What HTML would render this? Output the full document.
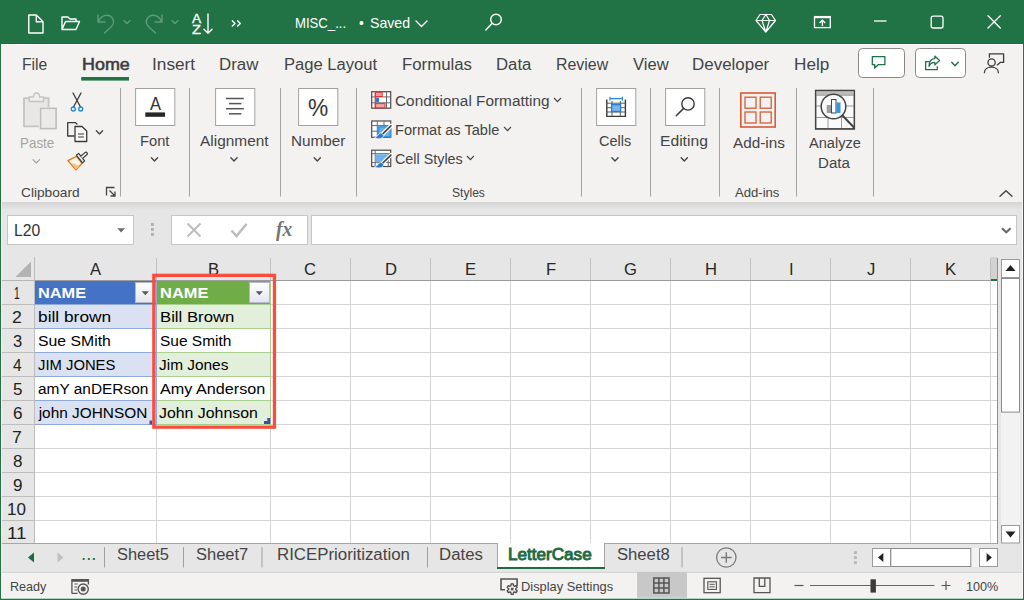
<!DOCTYPE html>
<html lang="en"><head><meta charset="utf-8"><title>MISC - Excel</title>
<style>
html,body{margin:0;padding:0;background:#fff;}
body{width:1024px;height:600px;overflow:hidden;position:relative;font-family:"Liberation Sans",sans-serif;}
#app{position:absolute;left:0;top:0;width:1024px;height:600px;overflow:hidden;background:#f3f2f1;}
.layer{position:absolute;left:0;top:0;width:1024px;height:600px;display:block}
.t{position:absolute;white-space:pre;line-height:1;transform-origin:0 0;font-family:"Liberation Sans",sans-serif;}
</style></head><body>
<div id="app">
<svg class="layer" width="1024" height="600" viewBox="0 0 1024 600">
<defs><linearGradient id="shadow" x1="0" y1="0" x2="0" y2="1"><stop offset="0" stop-color="#d4d4d4"/><stop offset="1" stop-color="#e6e6e6"/></linearGradient><linearGradient id="fbtn" x1="0" y1="0" x2="0" y2="1"><stop offset="0" stop-color="#ffffff"/><stop offset="1" stop-color="#e4e6ee"/></linearGradient></defs>
<rect x="0" y="0" width="1024" height="44" fill="#217346" />
<rect x="0" y="44" width="1024" height="158" fill="#f3f2f1" />
<rect x="0" y="202" width="1024" height="56" fill="#e6e6e6" />
<rect x="0" y="202" width="1024" height="8" fill="url(#shadow)" />
<rect x="0" y="258" width="1024" height="23" fill="#e6e6e6" />
<rect x="0" y="281" width="35" height="263" fill="#e6e6e6" />
<rect x="35" y="281" width="962" height="262" fill="#fff" />
<rect x="997" y="258" width="27" height="286" fill="#e6e6e6" />
<rect x="0" y="544" width="1024" height="28.5" fill="#e6e6e6" />
<rect x="0" y="572.5" width="1024" height="28" fill="#f3f2f1" />
<line x1="0" y1="572.3" x2="1024" y2="572.3" stroke="#cfcfcf" stroke-width="1" />
<path d="M28.8 15 H36.3 L43 21.7 V33 H28.8 Z M36.3 15 V21.7 H43" stroke="#fff" stroke-width="1.4" fill="none" stroke-linejoin="round" stroke-linecap="round"/>
<path d="M62 29.5 V17 H68 L70 19 H76 V21.5 M62 29.5 L65.5 21.5 H79.5 L76 29.5 Z" stroke="#fff" stroke-width="1.4" fill="none" stroke-linejoin="round" stroke-linecap="round"/>
<path d="M98 15 V22 H105 M98.5 21.5 C101 15 108 13.5 112 17.5 C115 21 113.5 25 110 28 L104.5 33" stroke="#5f9c7b" stroke-width="1.4" fill="none" stroke-linejoin="round" stroke-linecap="round"/>
<path d="M124 20.5 L127 23.5 L130 20.5" stroke="#5f9c7b" stroke-width="1.4" fill="none" stroke-linejoin="round" stroke-linecap="round"/>
<path d="M162 15 V22 H155 M161.5 21.5 C159 15 152 13.5 148 17.5 C145 21 146.5 25 150 28 L155.5 33" stroke="#5f9c7b" stroke-width="1.4" fill="none" stroke-linejoin="round" stroke-linecap="round"/>
<path d="M172 20.5 L175 23.5 L178 20.5" stroke="#5f9c7b" stroke-width="1.4" fill="none" stroke-linejoin="round" stroke-linecap="round"/>
<path d="M208 14 V33.3 M204 29.3 L208 33.3 L212 29.3" stroke="#fff" stroke-width="1.4" fill="none" stroke-linejoin="round" stroke-linecap="round"/>
<path d="M232.3 20.8 L235 23.4 L232.3 26 M237.6 20.8 L240.3 23.4 L237.6 26" stroke="#fff" stroke-width="1.4" fill="none" stroke-linejoin="round" stroke-linecap="round"/>
<path d="M416 21 L421.5 26.5 L427 21" stroke="#fff" stroke-width="1.4" fill="none" stroke-linejoin="round" stroke-linecap="round"/>
<circle cx="496" cy="19.5" r="5.3" stroke="#fff" stroke-width="1.4" fill="none" stroke-linejoin="round" stroke-linecap="round"/><path d="M492 23.5 L485.8 30" stroke="#fff" stroke-width="1.4" fill="none" stroke-linejoin="round" stroke-linecap="round"/>
<path d="M760 14.5 H771.5 L775.5 20.5 L765.8 32 L756 20.5 Z M756 20.5 H775.5 M762 20.5 L765.8 14.5 L769.5 20.5 L765.8 32 Z" stroke="#fff" stroke-width="1.2" fill="none" stroke-linejoin="round"/>
<rect x="814.5" y="16.6" width="15.8" height="11" stroke="#fff" stroke-width="1.3" fill="none"/><path d="M814 17.2 H831" stroke="#fff" stroke-width="2"/><path d="M822.4 26 V20.3 M819.6 23 L822.4 20.2 L825.2 23" stroke="#fff" stroke-width="1.3" fill="none"/>
<path d="M874 21 H886.5" stroke="#fff" stroke-width="1.3"/>
<rect x="931.2" y="16.2" width="11.8" height="11.8" rx="2" stroke="#fff" stroke-width="1.3" fill="none"/>
<path d="M988 15.7 L1000.3 28 M1000.3 15.7 L988 28" stroke="#fff" stroke-width="1.3" stroke-linecap="round"/>
<rect x="81.2" y="77" width="47.8" height="3.6" fill="#217346" />
<rect x="858.5" y="48.5" width="46" height="29" rx="4" fill="#fff" stroke="#8a8886" stroke-width="1"/>
<rect x="915.5" y="48.5" width="50" height="29" rx="4" fill="#fff" stroke="#8a8886" stroke-width="1"/>
<path d="M872.3 56.7 H884.9 V64.7 H878.2 L874.7 68 V64.7 H872.3 Z" stroke="#1e7145" stroke-width="1.3" fill="none" stroke-linejoin="round" stroke-linecap="round"/>
<path d="M929.6 61.7 H925.6 V69.6 H937.3 V66.2" stroke="#1e7145" stroke-width="1.3" fill="none" stroke-linejoin="round"/><path d="M934.8 56 L939.5 60.5 L934.8 65 V62.4 C932 62.4 930.2 63.6 929 66.4 C929 61.6 931.4 58.8 934.8 58.6 Z" stroke="#1e7145" stroke-width="1.15" fill="none" stroke-linejoin="round"/>
<path d="M951.75 62.3 L955 65.7 L958.25 62.3" stroke="#1e7145" stroke-width="1.4" fill="none" stroke-linecap="round" stroke-linejoin="round"/>
<circle cx="991.6" cy="62.4" r="3.6" stroke="#3b3a39" stroke-width="1.3" fill="none" stroke-linejoin="round" stroke-linecap="round"/><path d="M984.4 72.7 C984.4 65.2 998.4 65.2 998.4 72.7 M989.4 57.2 V53.9 H1003.6 V62.4 H1000.2 L997.3 64.9" stroke="#3b3a39" stroke-width="1.3" fill="none" stroke-linejoin="round" stroke-linecap="round"/>
<line x1="120.5" y1="88" x2="120.5" y2="196.5" stroke="#a6a4a2" stroke-width="1" />
<line x1="189.5" y1="88" x2="189.5" y2="196.5" stroke="#a6a4a2" stroke-width="1" />
<line x1="280.5" y1="88" x2="280.5" y2="196.5" stroke="#a6a4a2" stroke-width="1" />
<line x1="356.5" y1="88" x2="356.5" y2="196.5" stroke="#a6a4a2" stroke-width="1" />
<line x1="581.5" y1="88" x2="581.5" y2="196.5" stroke="#a6a4a2" stroke-width="1" />
<line x1="650.5" y1="88" x2="650.5" y2="196.5" stroke="#a6a4a2" stroke-width="1" />
<line x1="719.5" y1="88" x2="719.5" y2="196.5" stroke="#a6a4a2" stroke-width="1" />
<line x1="796.5" y1="88" x2="796.5" y2="196.5" stroke="#a6a4a2" stroke-width="1" />
<line x1="873.5" y1="88" x2="873.5" y2="196.5" stroke="#a6a4a2" stroke-width="1" />
<rect x="135.6" y="88.5" width="39.2" height="37" fill="#fff" stroke="#a3a19f" stroke-width="1"/>
<rect x="215.6" y="88.5" width="39.2" height="37" fill="#fff" stroke="#a3a19f" stroke-width="1"/>
<rect x="298.6" y="88.5" width="39.2" height="37" fill="#fff" stroke="#a3a19f" stroke-width="1"/>
<rect x="596.6" y="88.5" width="39.2" height="37" fill="#fff" stroke="#a3a19f" stroke-width="1"/>
<rect x="665.6" y="88.5" width="39.2" height="37" fill="#fff" stroke="#a3a19f" stroke-width="1"/>
<rect x="145.3" y="112.4" width="19.7" height="4.4" fill="#262626" />
<line x1="226" y1="98.5" x2="243.8" y2="98.5" stroke="#555" stroke-width="1.5" />
<line x1="229" y1="103.6" x2="241.4" y2="103.6" stroke="#555" stroke-width="1.5" />
<line x1="226" y1="108.7" x2="243.8" y2="108.7" stroke="#555" stroke-width="1.5" />
<line x1="229" y1="113.8" x2="241.4" y2="113.8" stroke="#555" stroke-width="1.5" />
<path d="M151.4 157.75 L154.5 161.05 L157.6 157.75" stroke="#444" stroke-width="1.35" fill="none" stroke-linecap="round" stroke-linejoin="round"/>
<path d="M230.9 157.75 L234 161.05 L237.1 157.75" stroke="#444" stroke-width="1.35" fill="none" stroke-linecap="round" stroke-linejoin="round"/>
<path d="M314.2 157.75 L317.3 161.05 L320.40000000000003 157.75" stroke="#444" stroke-width="1.35" fill="none" stroke-linecap="round" stroke-linejoin="round"/>
<path d="M611.9 157.75 L615 161.05 L618.1 157.75" stroke="#444" stroke-width="1.35" fill="none" stroke-linecap="round" stroke-linejoin="round"/>
<path d="M681.1999999999999 157.75 L684.3 161.05 L687.4 157.75" stroke="#444" stroke-width="1.35" fill="none" stroke-linecap="round" stroke-linejoin="round"/>
<path d="M33.0 159.60000000000002 L36.3 163.0 L39.599999999999994 159.60000000000002" stroke="#a6a4a2" stroke-width="1.3" fill="none" stroke-linecap="round" stroke-linejoin="round"/>
<path d="M96.4 130.75 L99.5 134.05 L102.6 130.75" stroke="#444" stroke-width="1.35" fill="none" stroke-linecap="round" stroke-linejoin="round"/>
<path d="M554.4 98.35 L557.5 101.65 L560.6 98.35" stroke="#444" stroke-width="1.35" fill="none" stroke-linecap="round" stroke-linejoin="round"/>
<path d="M504.4 127.35 L507.5 130.65 L510.6 127.35" stroke="#444" stroke-width="1.35" fill="none" stroke-linecap="round" stroke-linejoin="round"/>
<path d="M467.29999999999995 156.35 L470.4 159.65 L473.5 156.35" stroke="#444" stroke-width="1.35" fill="none" stroke-linecap="round" stroke-linejoin="round"/>
<path d="M1000 196.3 L1006 190.8 L1012 196.3" stroke="#444" stroke-width="1.4" fill="none" stroke-linecap="round" stroke-linejoin="round"/>
<path d="M24 98.2 H48.6 V126.4 H24 Z" fill="#e9e7e6" stroke="#c6c4c2" stroke-width="1.8" stroke-linejoin="round"/>
<path d="M29.3 101.4 V97 H33.4 C33.4 91.6 39.6 91.6 39.6 97 H43.6 V101.4 Z" fill="#f0efee" stroke="#c6c4c2" stroke-width="1.5" stroke-linejoin="round"/>
<rect x="39" y="106.8" width="19" height="23.6" fill="#f3f2f1"/>
<rect x="40.5" y="108.3" width="15.6" height="20.3" fill="#eceae9" stroke="#bfbdbb" stroke-width="1.6"/>
<path d="M73 93 L80.5 107 M81 93 L73.5 107" stroke="#3b3a39" stroke-width="1.3" fill="none" stroke-linecap="round"/><circle cx="73.3" cy="109" r="2" stroke="#1e8ad6" stroke-width="1.3" fill="none"/><circle cx="80.7" cy="109" r="2" stroke="#1e8ad6" stroke-width="1.3" fill="none"/>
<path d="M74 136 H67.7 V122.7 H75.5 L77 124" stroke="#3b3a39" stroke-width="1.3" fill="none" stroke-linejoin="round" stroke-linecap="round"/><path d="M75 126.5 H82 L86.7 131 V141.5 H75 Z" stroke="#3b3a39" stroke-width="1.3" fill="#f8f8f8" stroke-linejoin="round"/><path d="M78 134 H84 M78 137 H84" stroke="#3b3a39" stroke-width="1.1"/>
<path d="M67.9 160.6 L76.6 156.4 L82 163.3 L76 169.9 Z" stroke="#e07a12" stroke-width="1.4" fill="#fdf3e6" stroke-linejoin="round"/>
<path d="M71.6 162.8 L79.4 166 L76 169.4 Z" fill="#f7c27f"/>
<path d="M76.3 155.2 L78.6 153.4 L84.6 160.8 L82.6 162.9 Z" stroke="#3b3a39" stroke-width="1.2" fill="#f3f2f1" stroke-linejoin="round"/>
<path d="M80.6 156.2 L85 152.6 C86.6 151.4 88.3 153.6 86.8 154.8 L82.6 158.4" stroke="#3b3a39" stroke-width="1.2" fill="#f3f2f1" stroke-linejoin="round"/>
<path d="M106.5 195.5 V187.5 H114.5 M109.5 190.5 L115 196 M115 191.5 V196 H110.5" stroke="#444" stroke-width="1.3" fill="none"/>
<rect x="371.7" y="91.7" width="19" height="16.5" fill="#fff" stroke="#4a4a4a" stroke-width="1.2"/>
<path d="M386.5 91.7 V108.2 M371.7 96.9 H390.7 M371.7 102.8 H390.7" stroke="#6a6a6a" stroke-width="1" fill="none"/>
<rect x="375.6" y="92.3" width="6.6" height="4.2" fill="#f7a1a5" stroke="#e5332f" stroke-width="1"/>
<rect x="375.6" y="103.6" width="9.4" height="4.2" fill="#f7a1a5" stroke="#e5332f" stroke-width="1"/>
<rect x="375.4" y="97.7" width="3.6" height="4.6" fill="#2b7cd3"/>
<path d="M375.2 91.7 V108.2" stroke="#e5332f" stroke-width="1.2"/>
<rect x="371.7" y="121" width="19" height="16.3" fill="#fff" stroke="#4a4a4a" stroke-width="1.2"/>
<path d="M377.3 121 V137.3 M384 121 V126 M371.7 125.6 H390.7 M371.7 131.2 H378" stroke="#6a6a6a" stroke-width="1" fill="none"/>
<rect x="377.8" y="126.1" width="13.4" height="11.4" fill="#3a96dd"/>
<rect x="379.3" y="127.6" width="10.4" height="8.4" fill="#69b1ea"/>
<path d="M391.1 125.7 L381.9 134.7" stroke="#fff" stroke-width="4" stroke-linecap="round"/><path d="M390.9 125.9 L382.3 134.3" stroke="#444" stroke-width="1.7" stroke-linecap="round"/><path d="M381.1 132.7 C378.3 133.3 378.1 136.7 374.5 137.7 C379.0 139.9 383.5 138.5 383.7 135.3 Z" fill="#2b7cd3" stroke="#f3f2f1" stroke-width="0.8"/>
<rect x="371.7" y="150.2" width="19" height="16.3" fill="#fff" stroke="#4a4a4a" stroke-width="1.2"/>
<path d="M375.2 150.2 V166.5 M371.7 153.7 H390.7 M371.7 162.6 H390.7 M388.2 153.7 V166.5" stroke="#6a6a6a" stroke-width="1" fill="none"/>
<rect x="375.7" y="154.2" width="12" height="8" fill="#6fb3ee"/>
<path d="M391.1 154.89999999999998 L381.9 163.89999999999998" stroke="#fff" stroke-width="4" stroke-linecap="round"/><path d="M390.9 155.1 L382.3 163.5" stroke="#444" stroke-width="1.7" stroke-linecap="round"/><path d="M381.1 161.89999999999998 C378.3 162.5 378.1 165.89999999999998 374.5 166.89999999999998 C379.0 169.1 383.5 167.7 383.7 164.5 Z" fill="#2b7cd3" stroke="#f3f2f1" stroke-width="0.8"/>
<path d="M606.8 99.6 V116.4 H625.4 V99.6" stroke="#3b3a39" stroke-width="1.4" fill="#fff"/>
<path d="M606.8 103.2 H625.4 M606.8 107.7 H625.4 M606.8 112 H625.4 M612 101 V116.4 M620.3 101 V116.4" stroke="#5a5a5a" stroke-width="1" fill="none"/>
<rect x="611.6" y="104.7" width="9" height="6.8" fill="#7db5ea" stroke="#1e7fd6" stroke-width="1.3"/>
<path d="M610 96.8 V100.5 M622.4 96.8 V100.5 M610 98.6 H622.4" stroke="#2b88d8" stroke-width="1.2" fill="none"/>
<circle cx="688" cy="103.9" r="6.2" stroke="#3b3a39" stroke-width="1.4" fill="#fafafa"/><path d="M683.4 108.6 L676.2 115.8" stroke="#3b3a39" stroke-width="1.5" stroke-linecap="round"/>
<rect x="740.8" y="93" width="34.4" height="34" fill="none" stroke="#d85b35" stroke-width="1.6"/>
<rect x="745" y="97.2" width="11" height="11" fill="none" stroke="#d85b35" stroke-width="1.3"/>
<rect x="760.2" y="97.2" width="11" height="11" fill="none" stroke="#d85b35" stroke-width="1.3"/>
<rect x="745" y="112" width="11" height="11" fill="none" stroke="#d85b35" stroke-width="1.3"/>
<rect x="760.2" y="112" width="11" height="11" fill="none" stroke="#d85b35" stroke-width="1.3"/>
<rect x="815.6" y="90.5" width="38.8" height="38.4" fill="#fafafa" stroke="#444" stroke-width="1.3"/>
<rect x="815.6" y="90.5" width="38.8" height="4.6" fill="#bdbdbd" />
<path d="M815.6 95.2 H854.4 M815.6 106 H854.4 M815.6 117.5 H854.4 M828 95.2 V129 M841.5 95.2 V129" stroke="#9a9a9a" stroke-width="1"/>
<rect x="815.6" y="90.5" width="38.8" height="38.4" fill="none" stroke="#444" stroke-width="1.3"/>
<circle cx="833.5" cy="106.5" r="12.3" fill="#fafafa" stroke="#444" stroke-width="1.5"/>
<rect x="826.7" y="105" width="4.5" height="8" fill="#9e9e9e" />
<rect x="831.5" y="99.5" width="4.5" height="13.5" fill="#fff" stroke="#444" stroke-width="1"/>
<rect x="836.3" y="102.5" width="4.2" height="10.5" fill="#3a96dd" />
<path d="M842.5 115.5 L854 127.5" stroke="#444" stroke-width="2" stroke-linecap="round"/>
<rect x="7.5" y="215.5" width="126" height="29" fill="#fff" stroke="#c6c6c6" stroke-width="1"/>
<rect x="171.5" y="215.5" width="136" height="29" fill="#fff" stroke="#c6c6c6" stroke-width="1"/>
<rect x="311.5" y="215.5" width="705" height="29" fill="#fff" stroke="#c6c6c6" stroke-width="1"/>
<path d="M117.3 228.2 H125 L121.15 232.4 Z" stroke="none" stroke-width="1" fill="#6a6a6a" />
<rect x="151" y="223" width="2.8" height="2.8" fill="#adadad" />
<rect x="151" y="228" width="2.8" height="2.8" fill="#adadad" />
<rect x="151" y="233" width="2.8" height="2.8" fill="#adadad" />
<path d="M187.5 223.5 L200.5 236.5 M200.5 223.5 L187.5 236.5" stroke="#bdbdbd" stroke-width="2" fill="none"/>
<path d="M231.5 230.5 L236.5 236 L246.5 224" stroke="#bdbdbd" stroke-width="2.6" fill="none"/>
<path d="M1002 228.3 L1006.3 232.3 L1010.6 228.3" stroke="#6a6a6a" stroke-width="2.2" fill="none" />
<line x1="35" y1="280.5" x2="997" y2="280.5" stroke="#9d9d9d" stroke-width="1" />
<line x1="1" y1="280.5" x2="35" y2="280.5" stroke="#b5b5b5" stroke-width="1" />
<line x1="34.5" y1="257" x2="34.5" y2="543" stroke="#bcbcbc" stroke-width="1" />
<line x1="156.5" y1="258" x2="156.5" y2="280" stroke="#c0c0c0" stroke-width="1" />
<line x1="270.5" y1="258" x2="270.5" y2="280" stroke="#c0c0c0" stroke-width="1" />
<line x1="350.5" y1="258" x2="350.5" y2="280" stroke="#c0c0c0" stroke-width="1" />
<line x1="430.5" y1="258" x2="430.5" y2="280" stroke="#c0c0c0" stroke-width="1" />
<line x1="510.5" y1="258" x2="510.5" y2="280" stroke="#c0c0c0" stroke-width="1" />
<line x1="590.5" y1="258" x2="590.5" y2="280" stroke="#c0c0c0" stroke-width="1" />
<line x1="670.5" y1="258" x2="670.5" y2="280" stroke="#c0c0c0" stroke-width="1" />
<line x1="750.5" y1="258" x2="750.5" y2="280" stroke="#c0c0c0" stroke-width="1" />
<line x1="830.5" y1="258" x2="830.5" y2="280" stroke="#c0c0c0" stroke-width="1" />
<line x1="910.5" y1="258" x2="910.5" y2="280" stroke="#c0c0c0" stroke-width="1" />
<line x1="990.5" y1="258" x2="990.5" y2="280" stroke="#c0c0c0" stroke-width="1" />
<path d="M31 261.5 V277 H15.5 Z" stroke="none" stroke-width="1" fill="#b3b3b3" />
<rect x="991" y="257" width="6" height="23" fill="#d2d2d2" />
<rect x="991" y="279" width="6" height="2" fill="#217346" />
<line x1="1" y1="304.5" x2="34" y2="304.5" stroke="#bdbdbd" stroke-width="1" />
<line x1="1" y1="328.5" x2="34" y2="328.5" stroke="#bdbdbd" stroke-width="1" />
<line x1="1" y1="352.5" x2="34" y2="352.5" stroke="#bdbdbd" stroke-width="1" />
<line x1="1" y1="376.5" x2="34" y2="376.5" stroke="#bdbdbd" stroke-width="1" />
<line x1="1" y1="400.5" x2="34" y2="400.5" stroke="#bdbdbd" stroke-width="1" />
<line x1="1" y1="424.5" x2="34" y2="424.5" stroke="#bdbdbd" stroke-width="1" />
<line x1="1" y1="448.5" x2="34" y2="448.5" stroke="#bdbdbd" stroke-width="1" />
<line x1="1" y1="472.5" x2="34" y2="472.5" stroke="#bdbdbd" stroke-width="1" />
<line x1="1" y1="496.5" x2="34" y2="496.5" stroke="#bdbdbd" stroke-width="1" />
<line x1="1" y1="520.5" x2="34" y2="520.5" stroke="#bdbdbd" stroke-width="1" />
<line x1="35" y1="304.5" x2="997" y2="304.5" stroke="#d4d4d4" stroke-width="1" />
<line x1="35" y1="328.5" x2="997" y2="328.5" stroke="#d4d4d4" stroke-width="1" />
<line x1="35" y1="352.5" x2="997" y2="352.5" stroke="#d4d4d4" stroke-width="1" />
<line x1="35" y1="376.5" x2="997" y2="376.5" stroke="#d4d4d4" stroke-width="1" />
<line x1="35" y1="400.5" x2="997" y2="400.5" stroke="#d4d4d4" stroke-width="1" />
<line x1="35" y1="424.5" x2="997" y2="424.5" stroke="#d4d4d4" stroke-width="1" />
<line x1="35" y1="448.5" x2="997" y2="448.5" stroke="#d4d4d4" stroke-width="1" />
<line x1="35" y1="472.5" x2="997" y2="472.5" stroke="#d4d4d4" stroke-width="1" />
<line x1="35" y1="496.5" x2="997" y2="496.5" stroke="#d4d4d4" stroke-width="1" />
<line x1="35" y1="520.5" x2="997" y2="520.5" stroke="#d4d4d4" stroke-width="1" />
<line x1="156.5" y1="281" x2="156.5" y2="543" stroke="#d4d4d4" stroke-width="1" />
<line x1="270.5" y1="281" x2="270.5" y2="543" stroke="#d4d4d4" stroke-width="1" />
<line x1="350.5" y1="281" x2="350.5" y2="543" stroke="#d4d4d4" stroke-width="1" />
<line x1="430.5" y1="281" x2="430.5" y2="543" stroke="#d4d4d4" stroke-width="1" />
<line x1="510.5" y1="281" x2="510.5" y2="543" stroke="#d4d4d4" stroke-width="1" />
<line x1="590.5" y1="281" x2="590.5" y2="543" stroke="#d4d4d4" stroke-width="1" />
<line x1="670.5" y1="281" x2="670.5" y2="543" stroke="#d4d4d4" stroke-width="1" />
<line x1="750.5" y1="281" x2="750.5" y2="543" stroke="#d4d4d4" stroke-width="1" />
<line x1="830.5" y1="281" x2="830.5" y2="543" stroke="#d4d4d4" stroke-width="1" />
<line x1="910.5" y1="281" x2="910.5" y2="543" stroke="#d4d4d4" stroke-width="1" />
<line x1="990.5" y1="281" x2="990.5" y2="543" stroke="#d4d4d4" stroke-width="1" />
<rect x="35" y="281" width="121" height="24" fill="#4472c4" />
<rect x="35" y="305" width="121" height="24" fill="#d9e1f2" />
<rect x="35" y="353" width="121" height="24" fill="#d9e1f2" />
<rect x="35" y="401" width="121" height="24" fill="#d9e1f2" />
<rect x="35" y="329" width="121" height="24" fill="#fff" />
<rect x="35" y="377" width="121" height="24" fill="#fff" />
<line x1="35" y1="304.5" x2="156" y2="304.5" stroke="#8ea9db" stroke-width="1" />
<line x1="35" y1="328.5" x2="156" y2="328.5" stroke="#8ea9db" stroke-width="1" />
<line x1="35" y1="352.5" x2="156" y2="352.5" stroke="#8ea9db" stroke-width="1" />
<line x1="35" y1="376.5" x2="156" y2="376.5" stroke="#8ea9db" stroke-width="1" />
<line x1="35" y1="400.5" x2="156" y2="400.5" stroke="#8ea9db" stroke-width="1" />
<line x1="35" y1="424.5" x2="156" y2="424.5" stroke="#8ea9db" stroke-width="1" />
<rect x="157" y="281" width="114" height="24" fill="#70ad47" />
<rect x="157" y="305" width="114" height="24" fill="#e2efda" />
<rect x="157" y="353" width="114" height="24" fill="#e2efda" />
<rect x="157" y="401" width="114" height="24" fill="#e2efda" />
<rect x="157" y="329" width="114" height="24" fill="#fff" />
<rect x="157" y="377" width="114" height="24" fill="#fff" />
<line x1="157" y1="304.5" x2="271" y2="304.5" stroke="#a9d08e" stroke-width="1" />
<line x1="157" y1="328.5" x2="271" y2="328.5" stroke="#a9d08e" stroke-width="1" />
<line x1="157" y1="352.5" x2="271" y2="352.5" stroke="#a9d08e" stroke-width="1" />
<line x1="157" y1="376.5" x2="271" y2="376.5" stroke="#a9d08e" stroke-width="1" />
<line x1="157" y1="400.5" x2="271" y2="400.5" stroke="#a9d08e" stroke-width="1" />
<line x1="157" y1="424.5" x2="271" y2="424.5" stroke="#a9d08e" stroke-width="1" />
<line x1="270.5" y1="281" x2="270.5" y2="425" stroke="#a9d08e" stroke-width="1" />
<line x1="156.5" y1="281" x2="156.5" y2="425" stroke="#8ea9db" stroke-width="1" />
<rect x="135.5" y="282.5" width="20" height="20" fill="url(#fbtn)" stroke="#b4b8cc" stroke-width="1"/>
<path d="M141.7 291.3 H148.9 L145.3 295.2 Z" stroke="none" stroke-width="1" fill="#595959" />
<rect x="249.5" y="282.5" width="20" height="20" fill="url(#fbtn)" stroke="#b4b8cc" stroke-width="1"/>
<path d="M255.7 291.3 H262.9 L259.3 295.2 Z" stroke="none" stroke-width="1" fill="#595959" />
<path d="M149.5 424.5 V420.5 H152 V424.5 Z" stroke="none" stroke-width="1" fill="#3b4fa3" />
<path d="M264 424 H270.3 V418 H267.3 V421 H264 Z" stroke="none" stroke-width="1" fill="#3b4fa3" />
<line x1="997.5" y1="258" x2="997.5" y2="544" stroke="#8f8f8f" stroke-width="1" />
<rect x="1001" y="278" width="19.4" height="248" fill="#f2f2f2" />
<rect x="1001.5" y="259.5" width="18" height="18" fill="#fff" stroke="#9a9a9a"/>
<path d="M1005.5 271 L1010.5 265 L1015.5 271 Z" stroke="none" stroke-width="1" fill="#222" />
<rect x="1001.5" y="278.5" width="18" height="133.6" fill="#fff" stroke="#8a8a8a"/>
<rect x="1001.5" y="525.5" width="18" height="17.5" fill="#fff" stroke="#9a9a9a"/>
<path d="M1005.5 531.5 L1010.5 537.5 L1015.5 531.5 Z" stroke="none" stroke-width="1" fill="#222" />
<line x1="1" y1="543.5" x2="997" y2="543.5" stroke="#a6a6a6" stroke-width="1" />
<path d="M28 557.5 L34 552.5 V562.5 Z" stroke="none" stroke-width="1" fill="#1e6b41" />
<path d="M63.5 557.5 L57.5 552.5 V562.5 Z" stroke="none" stroke-width="1" fill="#c0c0c0" />
<line x1="104.5" y1="547" x2="104.5" y2="567.5" stroke="#a0a0a0" stroke-width="1" />
<line x1="183.5" y1="547" x2="183.5" y2="567.5" stroke="#a0a0a0" stroke-width="1" />
<line x1="262" y1="547" x2="262" y2="567.5" stroke="#a0a0a0" stroke-width="1" />
<line x1="427.5" y1="547" x2="427.5" y2="567.5" stroke="#a0a0a0" stroke-width="1" />
<line x1="682" y1="547" x2="682" y2="567.5" stroke="#a0a0a0" stroke-width="1" />
<rect x="497" y="543" width="108" height="25" fill="#fff" />
<line x1="497.5" y1="543" x2="497.5" y2="567" stroke="#a6a6a6" stroke-width="1" />
<line x1="604.5" y1="543" x2="604.5" y2="567" stroke="#a6a6a6" stroke-width="1" />
<rect x="497" y="567" width="108" height="2" fill="#1e6b41" />
<circle cx="726.3" cy="557.5" r="9.7" fill="none" stroke="#7a7a7a" stroke-width="1.3"/><path d="M721 557.5 H731.6 M726.3 552.2 V562.8" stroke="#7a7a7a" stroke-width="1.4"/>
<rect x="853.9" y="551.2" width="3" height="2.8" fill="#b6b6b6" />
<rect x="853.9" y="556.2" width="3" height="2.8" fill="#b6b6b6" />
<rect x="853.9" y="561.2" width="3" height="2.8" fill="#b6b6b6" />
<rect x="872" y="548" width="126" height="19" fill="#f2f2f2" />
<rect x="872.5" y="548.5" width="18" height="18" fill="#fff" stroke="#9a9a9a"/>
<path d="M883.3 553 L878 557.5 L883.3 562 Z" stroke="none" stroke-width="1" fill="#222" />
<rect x="890.8" y="548.5" width="80" height="18" fill="#fff" stroke="#8a8a8a"/>
<rect x="979.5" y="548.5" width="18" height="18" fill="#fff" stroke="#9a9a9a"/>
<path d="M986.6 553 L991.9 557.5 L986.6 562 Z" stroke="none" stroke-width="1" fill="#222" />
<path d="M71.9 593.4 V579.6 H88.4 V584.5 M71.9 593.4 H77.5" stroke="#555" stroke-width="1.3" fill="none"/><path d="M71.9 580.6 H88.4" stroke="#555" stroke-width="2.4"/><path d="M74.5 584 H77.6 M74.5 587 H77 M74.5 590 H77" stroke="#555" stroke-width="1.2"/><circle cx="83.2" cy="589.1" r="5.1" stroke="#555" stroke-width="1.4" fill="#f3f2f1"/><circle cx="83.2" cy="589.1" r="2.5" fill="#555"/>
<path d="M505 589.7 H501 V579 H517.1 V586" stroke="#555" stroke-width="1.6" fill="none"/>
<path d="M511.10 583.92 L513.30 583.92 L513.51 585.85 L514.35 586.34 L516.14 585.55 L517.24 587.46 L515.67 588.61 L515.67 589.59 L517.24 590.74 L516.14 592.65 L514.35 591.86 L513.51 592.35 L513.30 594.28 L511.10 594.28 L510.89 592.35 L510.05 591.86 L508.26 592.65 L507.16 590.74 L508.73 589.59 L508.73 588.61 L507.16 587.46 L508.26 585.55 L510.05 586.34 L510.89 585.85 Z" stroke="#444" stroke-width="1.2" fill="#f3f2f1" stroke-linejoin="round"/><circle cx="512.2" cy="589.1" r="1.5" fill="#555"/>
<rect x="637" y="572" width="50" height="26.5" fill="#c8c8c8" />
<path d="M653.8 578 H669 V593 H653.8 Z M658.9 578 V593 M663.9 578 V593 M653.8 583 H669 M653.8 588 H669" stroke="#555" stroke-width="1.5" fill="none"/>
<rect x="704" y="578.3" width="16.2" height="14.4" stroke="#555" stroke-width="1.3" fill="none"/><rect x="707.8" y="581.8" width="8.6" height="7.6" stroke="#555" stroke-width="1.1" fill="none"/><path d="M709.5 584.3 H714.7 M709.5 586.8 H714.7" stroke="#555" stroke-width="1"/>
<path d="M754 578 H770 V592.7 H754 Z M759.3 578 V586.3 H764.8 V578" stroke="#555" stroke-width="1.3" fill="none"/>
<line x1="794.5" y1="585.5" x2="803.5" y2="585.5" stroke="#555" stroke-width="1.2" />
<line x1="810" y1="585.5" x2="934.5" y2="585.5" stroke="#666" stroke-width="1" />
<rect x="870.5" y="579.3" width="5.4" height="13.3" fill="#3b3b3b" />
<path d="M941.5 585.5 H950.5 M946 581 V590" stroke="#555" stroke-width="1.2"/>
<rect x="1" y="44" width="1022" height="1" fill="#fbfbfa" />
<rect x="1" y="44" width="1" height="555" fill="#f9f9f8" />
<rect x="1022" y="44" width="1" height="555" fill="#fbfbfa" />
<rect x="1" y="597.8" width="1022" height="1" fill="#f9f9f8" />
<rect x="0" y="43" width="1024" height="1" fill="#1c6a3e" />
<rect x="0" y="44" width="1" height="556" fill="#217346" />
<rect x="1023" y="44" width="1" height="556" fill="#217346" />
<rect x="0" y="598.7" width="1024" height="1.3" fill="#217346" />
</svg>
<div id="labels">
<span class="t" style="left:295.17px;top:16px;font-size:14.5px;color:#fff;transform:scaleX(0.9060)">MISC_...</span>
<span class="t" style="left:358.53px;top:16px;font-size:14.5px;color:#fff;transform:scaleX(0.9375)">•</span>
<span class="t" style="left:369.77px;top:16px;font-size:14.5px;color:#fff;transform:scaleX(0.9747)">Saved</span>
<span class="t" style="left:192.00px;top:13px;font-size:12.2px;color:#fff;transform:scaleX(1.1250);-webkit-text-stroke:0.3px #fff">A</span>
<span class="t" style="left:191.80px;top:24px;font-size:12.2px;color:#fff;transform:scaleX(1.2000);-webkit-text-stroke:0.3px #fff">Z</span>
<span class="t" style="left:21.78px;top:57px;font-size:16px;color:#444444;transform:scaleX(0.9789)">File</span>
<span class="t" style="left:81.60px;top:57px;font-size:16px;color:#3d3d3d;transform:scaleX(1.1190);-webkit-text-stroke:0.55px #3d3d3d">Home</span>
<span class="t" style="left:151.98px;top:57px;font-size:16px;color:#444444;transform:scaleX(1.0779)">Insert</span>
<span class="t" style="left:219.43px;top:57px;font-size:16px;color:#444444;transform:scaleX(1.0552)">Draw</span>
<span class="t" style="left:284.45px;top:57px;font-size:16px;color:#444444;transform:scaleX(1.0367)">Page Layout</span>
<span class="t" style="left:402.44px;top:57px;font-size:16px;color:#444444;transform:scaleX(1.0500)">Formulas</span>
<span class="t" style="left:495.69px;top:57px;font-size:16px;color:#444444;transform:scaleX(1.0462)">Data</span>
<span class="t" style="left:555.76px;top:57px;font-size:16px;color:#444444;transform:scaleX(0.9951)">Review</span>
<span class="t" style="left:633.25px;top:57px;font-size:16px;color:#444444;transform:scaleX(1.0362)">View</span>
<span class="t" style="left:692.43px;top:57px;font-size:16px;color:#444444;transform:scaleX(1.0594)">Developer</span>
<span class="t" style="left:793.66px;top:57px;font-size:16px;color:#444444;transform:scaleX(1.0726)">Help</span>
<span class="t" style="left:19.84px;top:136px;font-size:14.5px;color:#a6a4a2;transform:scaleX(0.9248)">Paste</span>
<span class="t" style="left:20.83px;top:186px;font-size:13.4px;color:#444444;transform:scaleX(1.0224)">Clipboard</span>
<span class="t" style="left:139.82px;top:133px;font-size:15.5px;color:#444444;transform:scaleX(0.9479)">Font</span>
<span class="t" style="left:200.40px;top:133px;font-size:15.5px;color:#444444;transform:scaleX(0.9949)">Alignment</span>
<span class="t" style="left:290.57px;top:133px;font-size:15.5px;color:#444444;transform:scaleX(0.9850)">Number</span>
<span class="t" style="left:394.66px;top:93px;font-size:15.5px;color:#444444;transform:scaleX(0.9906)">Conditional Formatting</span>
<span class="t" style="left:395.02px;top:122px;font-size:15.5px;color:#444444;transform:scaleX(0.9413)">Format as Table</span>
<span class="t" style="left:394.71px;top:151px;font-size:15.5px;color:#444444;transform:scaleX(0.9250)">Cell Styles</span>
<span class="t" style="left:451.92px;top:186px;font-size:13.4px;color:#444444;transform:scaleX(0.9021)">Styles</span>
<span class="t" style="left:599.30px;top:133px;font-size:15.5px;color:#444444;transform:scaleX(0.9323)">Cells</span>
<span class="t" style="left:660.24px;top:133px;font-size:15.5px;color:#444444;transform:scaleX(1.0099)">Editing</span>
<span class="t" style="left:732.50px;top:135px;font-size:15.5px;color:#444444;transform:scaleX(0.9885)">Add-ins</span>
<span class="t" style="left:735.40px;top:186px;font-size:13.4px;color:#444444;transform:scaleX(0.9778)">Add-ins</span>
<span class="t" style="left:809.30px;top:135px;font-size:15.5px;color:#444444;transform:scaleX(0.9413)">Analyze</span>
<span class="t" style="left:818.38px;top:155px;font-size:15.5px;color:#444444;transform:scaleX(0.9746)">Data</span>
<span class="t" style="left:307.99px;top:96px;font-size:24px;color:#333;transform:scaleX(0.9468)">%</span>
<span class="t" style="left:150.00px;top:95px;font-size:18px;color:#333;transform:scaleX(0.9167)">A</span>
<span class="t" style="left:13.81px;top:222px;font-size:16.5px;color:#333;transform:scaleX(0.9515)">L20</span>
<span class="t" style="left:275.60px;top:219px;font-size:20.5px;color:#747474;font-family:'Liberation Serif', serif;transform:scaleX(0.9455);font-weight:bold;font-style:italic">fx</span>
<span class="t" style="left:90.14px;top:262px;font-size:16px;color:#262626;transform:scaleX(1.0400)">A</span>
<span class="t" style="left:207.78px;top:262px;font-size:16px;color:#262626;transform:scaleX(1.0400)">B</span>
<span class="t" style="left:304.49px;top:262px;font-size:16px;color:#262626;transform:scaleX(1.0400)">C</span>
<span class="t" style="left:384.76px;top:262px;font-size:16px;color:#262626;transform:scaleX(1.0400)">D</span>
<span class="t" style="left:465.05px;top:262px;font-size:16px;color:#262626;transform:scaleX(1.0400)">E</span>
<span class="t" style="left:545.54px;top:262px;font-size:16px;color:#262626;transform:scaleX(1.0400)">F</span>
<span class="t" style="left:624.36px;top:262px;font-size:16px;color:#262626;transform:scaleX(1.0400)">G</span>
<span class="t" style="left:705.02px;top:262px;font-size:16px;color:#262626;transform:scaleX(1.0400)">H</span>
<span class="t" style="left:788.66px;top:262px;font-size:16px;color:#262626;transform:scaleX(1.0400)">I</span>
<span class="t" style="left:866.86px;top:262px;font-size:16px;color:#262626;transform:scaleX(1.0400)">J</span>
<span class="t" style="left:944.89px;top:262px;font-size:16px;color:#262626;transform:scaleX(1.0400)">K</span>
<span class="t" style="left:14.25px;top:286px;font-size:16px;color:#222;transform:scaleX(0.6429)">1</span>
<span class="t" style="left:12.47px;top:310px;font-size:16px;color:#222;transform:scaleX(1.1034)">2</span>
<span class="t" style="left:12.78px;top:334px;font-size:16px;color:#222;transform:scaleX(1.0323)">3</span>
<span class="t" style="left:13.06px;top:358px;font-size:16px;color:#222;transform:scaleX(0.9697)">4</span>
<span class="t" style="left:12.50px;top:382px;font-size:16px;color:#222;transform:scaleX(1.0667)">5</span>
<span class="t" style="left:12.50px;top:406px;font-size:16px;color:#222;transform:scaleX(1.0667)">6</span>
<span class="t" style="left:12.47px;top:430px;font-size:16px;color:#222;transform:scaleX(1.1034)">7</span>
<span class="t" style="left:12.50px;top:454px;font-size:16px;color:#222;transform:scaleX(1.0667)">8</span>
<span class="t" style="left:12.50px;top:478px;font-size:16px;color:#222;transform:scaleX(1.0667)">9</span>
<span class="t" style="left:7.47px;top:502px;font-size:16px;color:#222;transform:scaleX(1.0625)">10</span>
<span class="t" style="left:7.33px;top:526px;font-size:16px;color:#222;transform:scaleX(1.1724)">11</span>
<span class="t" style="left:37.61px;top:285px;font-size:15px;color:#fff;transform:scaleX(1.0901);font-weight:bold">NAME</span>
<span class="t" style="left:159.60px;top:285px;font-size:15px;color:#fff;transform:scaleX(1.0971);font-weight:bold">NAME</span>
<span class="t" style="left:37.57px;top:309px;font-size:15.4px;color:#000;transform:scaleX(1.1254)">bill brown</span>
<span class="t" style="left:37.53px;top:333px;font-size:15.4px;color:#000;transform:scaleX(1.0253)">Sue SMith</span>
<span class="t" style="left:37.96px;top:357px;font-size:15.4px;color:#000;transform:scaleX(0.9623)">JIM JONES</span>
<span class="t" style="left:37.95px;top:381px;font-size:15.4px;color:#000;transform:scaleX(1.0023)">amY anDERson</span>
<span class="t" style="left:38.70px;top:405px;font-size:15.4px;color:#000;transform:scaleX(1.0000)">john JOHNSON</span>
<span class="t" style="left:159.94px;top:309px;font-size:15.4px;color:#000;transform:scaleX(1.0868)">Bill Brown</span>
<span class="t" style="left:159.65px;top:333px;font-size:15.4px;color:#000;transform:scaleX(1.0051)">Sue Smith</span>
<span class="t" style="left:159.45px;top:357px;font-size:15.4px;color:#000;transform:scaleX(1.0015)">Jim Jones</span>
<span class="t" style="left:160.20px;top:381px;font-size:15.4px;color:#000;transform:scaleX(1.0529)">Amy Anderson</span>
<span class="t" style="left:159.44px;top:405px;font-size:15.4px;color:#000;transform:scaleX(1.0317)">John Johnson</span>
<span class="t" style="left:81.36px;top:545px;font-size:18px;color:#1e6b41;transform:scaleX(1.0250)">...</span>
<span class="t" style="left:116.73px;top:547px;font-size:16px;color:#444444;transform:scaleX(1.0254)">Sheet5</span>
<span class="t" style="left:195.98px;top:547px;font-size:16px;color:#444444;transform:scaleX(1.0305)">Sheet7</span>
<span class="t" style="left:277.18px;top:547px;font-size:16px;color:#444444;transform:scaleX(1.0524)">RICEPrioritization</span>
<span class="t" style="left:439.19px;top:547px;font-size:16px;color:#444444;transform:scaleX(1.0500)">Dates</span>
<span class="t" style="left:508.46px;top:547px;font-size:16px;color:#1e6b41;transform:scaleX(1.0689);-webkit-text-stroke:0.9px #1e6b41">LetterCase</span>
<span class="t" style="left:616.72px;top:547px;font-size:16px;color:#444444;transform:scaleX(1.0406)">Sheet8</span>
<span class="t" style="left:9.53px;top:580px;font-size:13px;color:#444444;transform:scaleX(0.9658)">Ready</span>
<span class="t" style="left:520.76px;top:580px;font-size:13px;color:#444444;transform:scaleX(0.9891)">Display Settings</span>
<span class="t" style="left:966.23px;top:580px;font-size:13px;color:#444444;transform:scaleX(0.9701)">100%</span>
</div>
<svg class="layer" width="1024" height="600" viewBox="0 0 1024 600">
<rect x="153.85" y="275.35" width="120.6" height="151.8" fill="none" stroke="#fb4d3d" stroke-width="3.3"/>
</svg>
</div>
</body></html>
